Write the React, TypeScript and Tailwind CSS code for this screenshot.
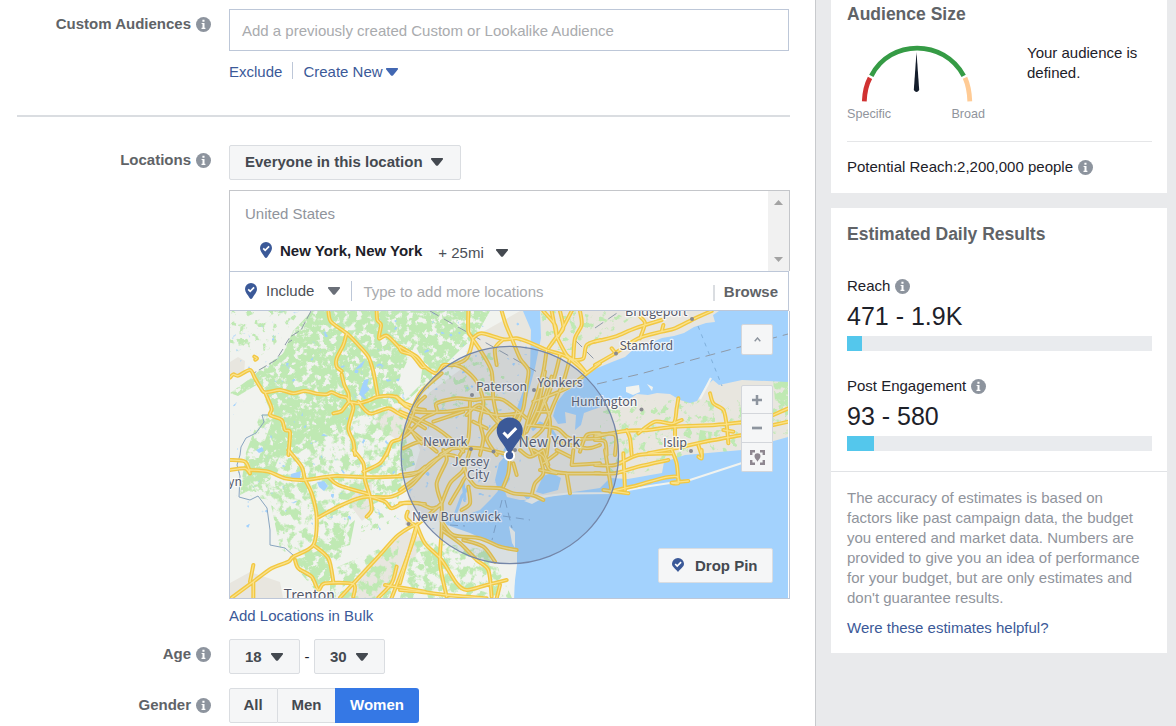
import React from "react";

function InfoIcon() {
  return (
    <svg className="h-[15px] w-[15px] shrink-0" viewBox="0 0 15 15">
      <circle cx="7.5" cy="7.5" r="7.5" fill="#8d949e" />
      <path d="M6.4 2.8h2.1v1.900H6.4zM5.6 6h2.900v4.800h.9v1.100H5.500v-1.100h1V7.100h-.9z" fill="#fff" />
    </svg>
  );
}

function Caret({ color = "#444950" }: { color?: string }) {
  return (
    <svg className="h-2 w-3 shrink-0" viewBox="0 0 12 8">
      <path d="M.6 0h10.8q1 .5.4 1.4L7.2 7.2Q6 8.4 4.8 7.2L.2 1.4Q-.4.5.6 0z" fill={color} />
    </svg>
  );
}

function Pin() {
  return (
    <svg className="h-4 w-3 shrink-0" viewBox="0 0 12 16">
      <path d="M6 0a6 6 0 0 1 6 6c0 3.2-2.6 5.6-4.6 8.9Q6 17.1 4.6 14.9C2.6 11.6 0 9.200 0 6a6 6 0 0 1 6-6z" fill="#3b5998" />
      <path d="M3.2 6.3l2 2 3.900-3.900" fill="none" stroke="#fff" strokeWidth="1.700" />
    </svg>
  );
}

function Label({ children }: { children: React.ReactNode }) {
  return (
    <div className="flex h-5 w-[211px] shrink-0 items-center justify-end gap-[5px] text-[15px] font-bold text-[#606367]">
      <span>{children}</span>
      <InfoIcon />
    </div>
  );
}

const button =
  "flex items-center rounded-[2px] border border-[#dadde1] bg-[#f5f6f7] text-[15px] font-bold text-[#444950]";

const roads: { x: number; y: number; d: string }[] = [
  {
    x: 225,
    y: 305,
    d: "M15 218L25 208 40 212 75 195 90 220 105 245 120 262 165 255 205 265 240 258 275 266 305 268 320 262 345 273 365 278 372 292M120 262L140 310 135 330 170 345 180 375 195 382 190 450M310 18L318 50 365 85 400 120 430 155 445 200 458 270M365 85L355 120 335 160 335 185 350 198M350 208L358 240 370 265 372 292M325 325L350 318 372 292 400 295 430 287 460 275 510 275 545 305 600 315M400 290L420 315 440 326 490 310 520 325 560 345 600 370M378 292L385 310 370 370 385 410 390 450M455 18L457 45 468 60 462 100 485 92 520 125 530 140 560 150 590 185 600 185M600 275L575 300 560 340 540 380 525 402 500 412 485 450M515 275L560 315M555 370L575 400 590 415M88 155L96 160 91 164",
  },
  {
    x: 400,
    y: 305,
    d: "M0 125L50 155 75 185 110 205 130 180 160 180 200 160 218 105 205 80 205 18M218 100L245 85 310 103 350 100 395 115 440 135 500 155 560 205M305 18L318 60 335 100M0 290L40 305 45 320 140 320 215 310 290 330 360 325M0 320L60 345 110 370 150 400 190 440M5 400L25 385 70 340 110 320 110 295 170 280 220 285 260 280 310 285 380 340M40 305L60 265 90 235 125 205M165 180L190 190 230 230 250 290 240 350 250 400 240 450M220 105L250 150 275 200 280 280 290 330 310 400M290 180L285 130 310 103M335 100L360 160 385 195 380 240 370 310 350 350M440 135L430 200 410 270 385 340 370 400M480 150L465 210 440 280 400 360M510 160L490 230 460 300 430 370 400 400M470 95L445 130M470 95L465 60 430 18M470 95L490 70 480 18M470 95L500 150 530 170 560 205M520 160L525 100 545 60 540 18M600 105L560 120 550 160 520 165M560 205L600 175M410 320L450 320M210 290L205 400 180 450M25 370L110 440M100 350L190 320M200 330L240 300 300 360M220 350L260 370M380 360L470 370 510 400 600 400M430 280L450 350 440 450M290 360L260 400 290 450M310 400L340 450M400 290L500 250 560 205M470 410L560 430 600 420M380 400L400 450M540 440L560 390 600 385M455 18L470 95M515 18L475 95M435 200L415 300 380 380M455 215L420 320M350 320L330 360 290 340M360 340L330 400M10 430L60 410 120 420M120 450L160 430 240 430 330 450",
  },
  {
    x: 595,
    y: 305,
    d: "M0 110L60 95 120 70 200 45M0 180L60 145 130 100 200 80 240 70 300 40 350 18M135 100L150 55 135 35M50 130L62 145M0 395L90 378 160 375 240 365 360 360 440 352M0 405L30 410 35 450M130 385L180 350 235 355 245 310 250 280M235 355L260 345M240 365L240 420M95 375L105 400 110 450M345 265L355 295 385 315 395 360 400 415M160 445L240 430 330 410 440 390M535 330L580 310M535 360L580 350M310 420L320 450M0 390L60 390 60 450M200 80L205 60M385 375L415 380",
  },
  {
    x: 225,
    y: 450,
    d: "M15 60L60 55 75 70 60 35 15 30M75 60L130 65 180 85 240 90 330 78 440 82 560 75 600 50M190 0L230 50 240 88 260 130 275 200 265 285 205 320 190 335 140 355 85 395 20 443M265 285L310 325 325 395M275 205L340 170 400 145 430 140 500 140 560 105 600 60M310 80L340 105 430 132M385 0L415 40 420 90 435 140 440 180 425 200M415 65L465 40 490 0M435 140L480 155 500 175 540 158 600 162M210 330L220 355 260 380 280 420 300 400 385 402 385 440M345 443L460 320 520 255 575 230 540 340 500 443M480 405L600 425M515 350L500 400 460 443M85 345L75 395M85 395L85 443M548 185L545 205 575 230",
  },
  {
    x: 400,
    y: 450,
    d: "M0 75L60 65 90 40 130 15 170 20 190 45 200 80M0 160L55 160 95 175 125 165M0 120L60 75 110 30 150 0M125 160L110 100 140 30 130 0M125 160L150 100 190 60 210 0M150 160L180 110 200 80 230 110 300 115 340 130 395 135 430 150M185 180L210 160 205 110M50 225L80 200 125 160M50 225L0 400M50 225L75 280 125 330 170 400 200 420 260 405 320 390M125 160L125 240 120 340 140 440M125 240L180 280 230 330 265 360 275 440M125 215L160 255 240 265 300 290 350 300M190 270L250 290 285 335M0 420L60 425 140 435 260 445M290 445L300 405M310 110L325 70 330 20M395 135L405 100 430 70 420 20M400 0L430 20 450 60 500 70 600 70M500 70L510 130M430 40L470 10M515 45L600 40M520 0L515 45M340 40L350 75M360 0L390 20 430 0M420 60L470 70M430 0L445 45M470 0L510 20",
  },
  {
    x: 595,
    y: 450,
    d: "M0 45L60 45 130 15 230 10M0 70L60 70 130 50 220 30M85 10L90 120M30 0L50 125M45 125L130 105 200 85 245 80 250 100 230 98 280 93M230 0L245 40 250 95M320 0L320 25 310 20M25 120L100 130",
  },
];

// Turns every polyline of a path into a curve through the same points.
function smooth(d: string) {
  return d
    .split("M")
    .filter(Boolean)
    .map((part) => {
      const n = part.split(/[\sL]+/).filter(Boolean).map(Number);
      const p: number[][] = [];
      for (let i = 0; i + 1 < n.length; i += 2) p.push([n[i], n[i + 1]]);
      let out = `M${p[0][0]} ${p[0][1]}`;
      for (let i = 0; i < p.length - 1; i++) {
        const a = p[i - 1] ?? p[i];
        const b = p[i];
        const c = p[i + 1];
        const e = p[i + 2] ?? c;
        out += `C${b[0] + (c[0] - a[0]) / 7} ${b[1] + (c[1] - a[1]) / 7} ${c[0] - (e[0] - b[0]) / 7} ${c[1] - (e[1] - b[1]) / 7} ${c[0]} ${c[1]}`;
      }
      return out;
    })
    .join("");
}

const roadCurves = roads.map((r) => ({ ...r, d: smooth(r.d) }));

const places: { x: number; y: number; t: string; s?: number }[] = [
  { x: 625, y: 316, t: "Bridgeport" },
  { x: 619.500, y: 350, t: "Stamford" },
  { x: 476, y: 391, t: "Paterson" },
  { x: 537.500, y: 387, t: "Yonkers" },
  { x: 571, y: 406, t: "Huntington" },
  { x: 423, y: 446, t: "Newark" },
  { x: 518.500, y: 447, t: "New York", s: 14.200 },
  { x: 663, y: 447, t: "Islip" },
  { x: 452, y: 466, t: "Jersey" },
  { x: 467, y: 479, t: "City" },
  { x: 412, y: 521, t: "New Brunswick" },
  { x: 283.500, y: 600, t: "Trenton", s: 14 },
  { x: 228, y: 486, t: "yn" },
];

const dots = [
  [692, 319], [616, 353.500], [472, 395], [534, 390], [641.500, 409.500], [471, 449], [493.500, 451.500],
  [691, 451], [408.500, 524], [515, 450],
];

function LocationMap() {
  return (
    <svg className="block h-[287px] w-[558px]" viewBox="230 311 558 287">
      <defs>
        <filter id="dense" x="0" y="0" width="100%" height="100%">
          <feTurbulence type="fractalNoise" baseFrequency="0.16" numOctaves="4" seed="4" />
          <feColorMatrix values="0 0 0 0 0  0 0 0 0 0  0 0 0 0 0  0 0 0 7 -2.350" result="n" />
          <feComposite in="SourceGraphic" in2="n" operator="in" />
        </filter>
        <filter id="sparse" x="0" y="0" width="100%" height="100%">
          <feTurbulence type="fractalNoise" baseFrequency="0.12" numOctaves="5" seed="9" />
          <feColorMatrix values="0 0 0 0 0  0 0 0 0 0  0 0 0 0 0  0 0 0 7 -3.200" result="n" />
          <feComposite in="SourceGraphic" in2="n" operator="in" />
        </filter>
        <filter id="parks" x="0" y="0" width="100%" height="100%">
          <feTurbulence type="fractalNoise" baseFrequency="0.13" numOctaves="4" seed="15" />
          <feColorMatrix values="0 0 0 0 0  0 0 0 0 0  0 0 0 0 0  0 0 0 9 -5.300" result="n" />
          <feComposite in="SourceGraphic" in2="n" operator="in" />
        </filter>
        <filter id="ponds" x="0" y="0" width="100%" height="100%">
          <feTurbulence type="fractalNoise" baseFrequency="0.13" numOctaves="2" seed="21" />
          <feColorMatrix values="0 0 0 0 0  0 0 0 0 0  0 0 0 0 0  0 0 0 14 -10.200" result="n" />
          <feComposite in="SourceGraphic" in2="n" operator="in" />
        </filter>
      </defs>

      <rect x="230" y="311" width="558" height="287" fill="#f1f3ef" />

      {/* built-up land */}
      <g fill="#e8e6df">
        <path d="M472 338L520 311H788V480L620 500 515 505 470 530 440 520 405 525 410 485 420 450 408 420 430 392 460 370z" />
        <path d="M230 362L238 357 245 361 244 374 230 376zM230 583L250 572 280 582 283 598H230zM350 484L372 482 371 513 362 521 350 505zM365 567L405 530 425 540 410 565 380 598H340zM378 413L410 405 416 425 398 440 375 427z" />
      </g>

      {/* forest and parkland */}
      <g fill="#bfe9b3">
        <path filter="url(#dense)" d="M312 311H490L476 336 462 348 430 380 408 400 370 410 345 425 300 452 258 460 273 418 255 374 283 353 293 331z" />
        <path filter="url(#parks)" d="M230 311H300L280 340 258 358 245 350 230 355z" />
        <path filter="url(#sparse)" d="M260 415L400 400 408 450 404 490 350 515 340 560 300 565 280 548 270 500 240 495 245 455z" />
        <path filter="url(#dense)" d="M326 545L355 520 350 545 325 552zM298 560L330 545 330 580 315 590 298 570zM245 460L280 455 270 480 240 495zM400 440L412 450 415 465 402 470z" />
        <path filter="url(#parks)" d="M365 490L400 490 395 520 360 540zM540 311H640L590 350 550 350zM420 370L500 350 510 410 440 420zM600 400H788V445L600 480z" />
        <path filter="url(#sparse)" d="M330 570L400 540 390 598H330zM415 540L490 550 512 598H400z" />
        <path filter="url(#dense)" d="M773 380H788V410L775 400zM700 430L712 432 710 443 698 442zM230 393L255 375 260 383 238 396zM420 552L440 550 450 566 428 575z" />
      </g>
      <path d="M415 345L425 365 410 390 398 384 402 372zM400 372L424 355 420 385 405 400z" fill="#f1f3ef" />

      {/* lakes */}
      <rect x="230" y="311" width="300" height="220" fill="#a3d2fd" filter="url(#ponds)" />
      <g fill="#a3d2fd">
        <path d="M364 380L369 379 367 386 370 389 362 397 359 394zM358 366L365 360 362 367 355 370zM317 482L324 481 328 486 324 491 319 487zM291 474L301 471 300 478 290 478zM256 450L262 447 264 451 259 453zM450 415L455 410 455 416z" />
      </g>

      {/* sea, sound, bays and rivers */}
      <g fill="#a3d2fd">
        <path d="M512 598L515 580 517 565 517 550 510 549 500 545 483 539 470 533 447 525 443 519 453 517 463 516 480 510 491 499 498 491 495 480 499 463 505 456 511 460 508 470 510 479 504 489 507 497 520 500 537 500 553 496 567 493 600 488 610 478 628 479 662 473 664 462 685 455 742 450 788 437V598z" />
        <path d="M719 311L713 315 715 322 706 323 694 327 684 333 674 336 662 338 648 344 642 350 635 348 625 357 612 362 595 369 587 375 577 385 565 392 557 402 553 416 558 424 566 423 565 412 576 415 575 430 581 425 584 413 592 410 607 405 622 398 628 400 637 394 648 395 657 393 670 394 680 400 690 403 697 401 706 386 713 380 719 385 742 380 788 382V311z" />
        <path d="M523 311H540L541 338 535 368 527 398 518 420 512 442 505 458 501 456 510 436 518 405 530 372 531 330z" />
        <path d="M543 476L552 473 561 478 558 490 543 494 536 492z" />
      </g>
      <path d="M532 430L540 423 550 428 558 440M470 485L462 496 455 515M463 482L465 500" fill="none" stroke="#a3d2fd" strokeWidth="3" />
      <g fill="#f1f3ef">
        <path d="M509 526L515 532 515 548 512 543zM626 387L639 385 640 392 633 395 626 392zM647 384L653 387 652 391zM524 501L540 495 545 497 532 504z" />
      </g>
      <path d="M538 497L568 493.500 612 493 650 486 690 480 742 463 770 449M700 399L711 378M515 550L513 598" fill="none" stroke="#f1f3ef" strokeWidth="2.200" />

      {/* borders and ferry lines */}
      <g fill="none" stroke="#8f9aa8" strokeWidth="1">
        <path d="M311 311L301 330 290 337 285 345 292 340M283 349L276 360 254 373" strokeDasharray="9 3" />
        <path d="M269 415L262 415 264 422 256 433 246 438 241 447 240 455 237 465 240 476 239 497 250 500 258 496 267 508 270 530 270 545 285 548 293 555 298 570 315 580 320 594" stroke="#89a5c0" strokeLinejoin="round" />
        <path d="M430 311L560 385M575 340L600 365M595 328L620 311M597 384L640 374 788 334" strokeDasharray="10 6" />
        <path d="M698 326L722 386" strokeDasharray="4 5" stroke="#7fb0dc" />
        <path d="M502 500L492 540M505 500L512 528M503 516L530 520M450 525L465 526" strokeDasharray="8 5" stroke="#7fa5cc" />
      </g>

      <g fill="none" strokeLinejoin="round" strokeLinecap="round">
        {roadCurves.map((r, i) => (
          <path key={i} transform={`translate(${r.x} ${r.y}) scale(.33333)`} d={r.d} stroke="#f2c843" strokeWidth="12" />
        ))}
        {roadCurves.map((r, i) => (
          <path key={i} transform={`translate(${r.x} ${r.y}) scale(.33333)`} d={r.d} stroke="#fae28a" strokeWidth="3.800" />
        ))}
      </g>

      {dots.map(([x, y], i) => (
        <circle key={i} cx={x} cy={y} r="2" fill="#8a8a8e" />
      ))}
      <g
        fontFamily="'Noto Sans CJK SC', 'Open Sans', sans-serif"
        fill="#565a6b"
        stroke="#fff"
        strokeOpacity=".75"
        strokeWidth="2.500"
        strokeLinejoin="round"
        style={{ paintOrder: "stroke" }}
      >
        {places.map((p) => (
          <text key={p.t} x={p.x} y={p.y} fontSize={p.s ?? 12.400}>
            {p.t}
          </text>
        ))}
      </g>

      <circle cx="509.800" cy="455" r="108.700" fill="#5d749c" fillOpacity=".16" stroke="#7486a8" strokeWidth="1.300" />
      <circle cx="509.500" cy="455.500" r="4.700" fill="#3b5998" stroke="#fff" strokeWidth="2" />
      <path d="M509.700 417.500a13 13 0 0 1 13 13c0 8-7 13-10.500 20.500q-2.500 3-5 0C503.700 443.500 496.700 438.500 496.700 430.500a13 13 0 0 1 13-13z" fill="#3b5998" />
      <path d="M503.500 432.500l4.200 4.300 8.500-8.700" fill="none" stroke="#fff" strokeWidth="3" />
    </svg>
  );
}

const mapButton = "flex w-8 items-center justify-center border border-[#d3d6db] bg-[#f5f6f7]";

function Gauge() {
  return (
    <svg className="block h-[60px] w-[112px]" viewBox="861 43 112 60">
      <g fill="none" strokeWidth="4.800">
        <path d="M864.300 101.300Q864.800 87.500 870 77.800" stroke="#d03232" />
        <path d="M871.300 75.800C890 38.800 944 38.800 963.700 75.800" stroke="#359b45" />
        <path d="M965 77.800Q969.300 87.500 969.800 101.300" stroke="#ffcb95" />
      </g>
      <path d="M916.500 52L919.200 90q-2.700 4-5.400 0z" fill="#141d2b" />
    </svg>
  );
}

function Metric({ name, value, fill }: { name: string; value: string; fill: number }) {
  return (
    <div>
      <div className="flex h-5 items-center gap-[5px] text-[15px] text-[#1d2129]">
        {name}
        <InfoIcon />
      </div>
      <div className="mt-1 h-8 text-[25px] leading-8 text-[#1d2129]">{value}</div>
      <div className="mt-1 h-[15px] bg-[#e9ebee]">
        <div className="h-full bg-[#54c7ec]" style={{ width: fill }} />
      </div>
    </div>
  );
}

export default function App() {
  return (
    <div
      className="flex h-[726px] w-[1176px] overflow-hidden bg-[#e9eaec] text-[15px] leading-5"
      style={{ fontFamily: "'Liberation Sans', Arial, sans-serif" }}
    >
      <main className="w-[816px] shrink-0 border-r border-[#c8cacd] bg-white">
        <section className="flex gap-[18px] pt-[9px]">
          <div className="pt-[5px]">
            <Label>Custom Audiences</Label>
          </div>
          <div>
            <div className="flex h-[42px] w-[560px] items-center border border-[#bdc7d8] px-3 pt-[2px] text-[#a9abae]">
              Add a previously created Custom or Lookalike Audience
            </div>
            <div className="mt-[11px] flex items-center text-[#3b5998]">
              <span>Exclude</span>
              <span className="mr-[10px] ml-[10px] h-[17px] w-px -translate-y-[2px] bg-[#bdc7d8]" />
              <span className="mr-[3px]">Create New</span>
              <Caret color="#4267b2" />
            </div>
          </div>
        </section>

        <div className="mt-[33px] ml-[17px] h-[2px] w-[773px] bg-[#dadde1]" />

        <section className="mt-7 flex gap-[18px]">
          <div className="pt-[5px]">
            <Label>Locations</Label>
          </div>
          <div className="w-[561px]">
            <button className={`${button} h-[35px] w-[232px] gap-2 pb-px pl-[15px]`}>
              Everyone in this location <Caret />
            </button>

            <div className="mt-[10px] flex h-[81px] border border-b-0 border-[#c4c6ca]">
              <div className="flex-1 pt-[13px]">
                <div className="pl-[15px] text-[#90949c]">United States</div>
                <div className="mt-[17px] flex items-center pl-[30px]">
                  <span className="flex -translate-y-px">
                    <Pin />
                  </span>
                  <span className="ml-2 font-bold text-[#1d2129]">New York, New York</span>
                  <span className="ml-4 translate-y-[2px] text-[#4b4f56]">+ 25mi</span>
                  <span className="ml-3 flex translate-y-[2px]">
                    <Caret />
                  </span>
                </div>
              </div>
              <div className="flex w-[21px] flex-col items-center justify-between bg-[#f1f1f1] py-[9px]">
                <svg className="h-[5px] w-[9px]" viewBox="0 0 9 5">
                  <path d="M4.500 0L9 5H0z" fill="#a3a3a3" />
                </svg>
                <svg className="h-[5px] w-[9px]" viewBox="0 0 9 5">
                  <path d="M4.500 5L0 0h9z" fill="#a3a3a3" />
                </svg>
              </div>
            </div>

            <div className="flex h-[40px] w-[560px] items-center border border-[#bdc7d8]">
              <span className="ml-[15px] flex">
                <Pin />
              </span>
              <span className="ml-[9px] text-[#4b4f56]">Include</span>
              <span className="ml-[14px] flex">
                <Caret color="#6a6f78" />
              </span>
              <span className="ml-[11px] h-5 w-px bg-[#bdc7d8]" />
              <span className="ml-[11px] flex-1 translate-y-px text-[#a9abae]">Type to add more locations</span>
              <span className="h-4 w-[2px] translate-y-[2px] bg-[#dadde1]" />
              <span className="mr-[10px] ml-[9px] translate-y-px font-bold text-[#606367]">Browse</span>
            </div>

            <div className="relative h-[288px] border-r border-b border-l border-[#bdc7d8]">
              <LocationMap />
              <button className={`${mapButton} absolute top-[13px] right-4 h-[31px] rounded-[2px]`}>
                <svg className="h-[5px] w-[7px]" viewBox="0 0 7 5">
                  <path d="M.7 4.300L3.500 1l2.800 3.300" fill="none" stroke="#8d949e" strokeWidth="1.400" />
                </svg>
              </button>
              <div className="absolute top-[74px] right-4 flex flex-col">
                <button className={`${mapButton} h-[29px] rounded-t-[2px]`}>
                  <svg className="h-[10px] w-[10px]" viewBox="0 0 10 10">
                    <path d="M5 0v10M0 5h10" stroke="#8d949e" strokeWidth="2.500" />
                  </svg>
                </button>
                <button className={`${mapButton} h-[29px] border-t-0`}>
                  <svg className="h-[10px] w-[10px]" viewBox="0 0 10 10">
                    <path d="M0 5h10" stroke="#8d949e" strokeWidth="2.700" />
                  </svg>
                </button>
                <button className={`${mapButton} h-[29px] rounded-b-[2px] border-t-0`}>
                  <svg className="h-[15px] w-[15px]" viewBox="0 0 15 15">
                    <path d="M1.200 5V1.200H5M10 1.200h3.800V5M13.800 10v3.800H10M5 13.800H1.200V10" fill="none" stroke="#8e8790" strokeWidth="2.400" />
                    <path d="M7.500 3.200a3 3 0 0 1 3 3c0 2-2 3.200-3 5.600-1-2.400-3-3.600-3-5.600a3 3 0 0 1 3-3z" fill="#8e8790" />
                  </svg>
                </button>
              </div>
              <button className={`${button} absolute right-4 bottom-[15px] h-[35px] w-[115px] gap-[11px] pl-[13px]`}>
                <svg className="h-[14px] w-3 -translate-y-px" viewBox="0 0 12 14">
                  <path d="M6 0a6 5.800 0 0 1 6 5.800C12 9 8.500 10.500 6 14 3.500 10.500 0 9 0 5.800A6 5.800 0 0 1 6 0z" fill="#3b5998" />
                  <path d="M3.200 6l2 2 3.900-3.900" fill="none" stroke="#fff" strokeWidth="1.700" />
                </svg>
                Drop Pin
              </button>
            </div>

            <div className="mt-[7px] text-[#3b5998]">Add Locations in Bulk</div>
          </div>
        </section>

        <section className="mt-[13px] flex gap-[18px]">
          <div className="pt-[5px]">
            <Label>Age</Label>
          </div>
          <div className="flex items-center">
            <button className={`${button} h-[35px] w-[71px] gap-[9px] pl-[15px]`}>
              18 <Caret />
            </button>
            <span className="w-[14px] text-center text-[#1d2129]">-</span>
            <button className={`${button} h-[35px] w-[71px] gap-[9px] pl-[15px]`}>
              30 <Caret />
            </button>
          </div>
        </section>

        <section className="mt-[14px] flex gap-[18px]">
          <div className="pt-[7px]">
            <Label>Gender</Label>
          </div>
          <div className="flex">
            <button className={`${button} h-[35px] w-[49px] justify-center rounded-r-none pr-px pb-[2px]`}>All</button>
            <button className={`${button} h-[35px] w-[57px] justify-center rounded-none border-x-0 pb-[2px]`}>Men</button>
            <button className="h-[35px] w-[84px] rounded-r-[3px] bg-[#3578e5] pb-[2px] font-bold text-white">
              Women
            </button>
          </div>
        </section>
      </main>

      <aside className="ml-[15px] w-[336px] shrink-0">
        <section className="h-[193px] bg-white px-4 pr-[15px] pt-1">
          <h2 className="text-[17.5px] font-bold text-[#606367]">Audience Size</h2>
          <div className="mt-[19px] flex">
            <div className="w-[138px]">
              <div className="pl-[14px]">
                <Gauge />
              </div>
              <div className="flex justify-between pt-px text-[12.6px] text-[#90949c]">
                <span>Specific</span>
                <span>Broad</span>
              </div>
            </div>
            <p className="ml-[42px] w-[120px] text-[#1d2129]">Your audience is defined.</p>
          </div>
          <div className="mt-[17px] flex items-center gap-[5px] border-t border-[#e5e6e8] pt-[15px] text-[#1d2129]">
            Potential Reach:2,200,000 people
            <InfoIcon />
          </div>
        </section>

        <section className="mt-[15px] h-[445px] bg-white">
          <div className="h-[264px] border-b border-[#e1e3e6] pt-4 pr-[15px] pl-4">
            <h2 className="text-[17.5px] font-bold text-[#606367]">Estimated Daily Results</h2>
            <div className="mt-8 flex flex-col gap-[25px]">
              <Metric name="Reach" value="471 - 1.9K" fill={15} />
              <Metric name="Post Engagement" value="93 - 580" fill={27} />
            </div>
          </div>
          <div className="pt-4 pl-4 text-[#90949c]">
            <p>
              The accuracy of estimates is based on
              <br />
              factors like past campaign data, the budget
              <br />
              you entered and market data. Numbers are
              <br />
              provided to give you an idea of performance
              <br />
              for your budget, but are only estimates and
              <br />
              don't guarantee results.
            </p>
            <p className="mt-[10px] text-[#3b5998]">Were these estimates helpful?</p>
          </div>
        </section>
      </aside>
    </div>
  );
}
